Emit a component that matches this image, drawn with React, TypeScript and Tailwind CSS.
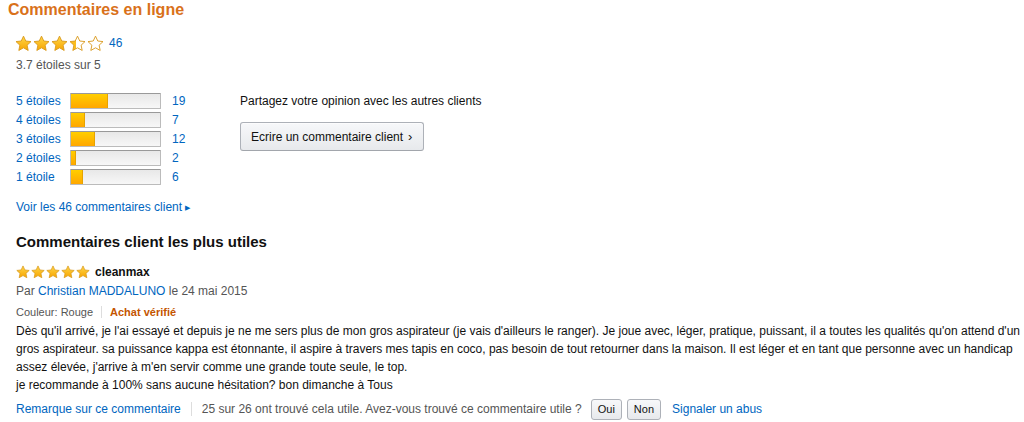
import React from "react";

const histogram = [
  { label: "5 étoiles", count: 19 },
  { label: "4 étoiles", count: 7 },
  { label: "3 étoiles", count: 12 },
  { label: "2 étoiles", count: 2 },
  { label: "1 étoile", count: 6 },
];

function Star({ size, fill }: { size: number; fill: number }) {
  // fill: 0..1 part of the star that is coloured
  const id = `g${Math.round(fill * 100)}`;
  return (
    <svg width={size} height={size} viewBox="0 0 24 24" className="block">
      <defs>
        <linearGradient id={`${id}v`} x1="0" y1="0" x2="0" y2="1">
          <stop offset="0" stopColor="#ffd84a" />
          <stop offset="1" stopColor="#f7a400" />
        </linearGradient>
        <linearGradient id={`${id}h`} x1="0" y1="0" x2="1" y2="0">
          <stop offset={fill} stopColor="#fbbd1b" />
          <stop offset={fill} stopColor="#ffffff" />
        </linearGradient>
      </defs>
      <path
        d="M12 1.6l3.2 6.9 7.4.8-5.5 5.1 1.5 7.4L12 18.1l-6.6 3.7 1.5-7.4-5.5-5.1 7.4-.8z"
        fill={fill >= 1 ? `url(#${id}v)` : `url(#${id}h)`}
        stroke="#d99a1e"
        strokeWidth="1.3"
        strokeLinejoin="round"
      />
    </svg>
  );
}

function Stars({ value, size }: { value: number; size: number }) {
  return (
    <div className="flex items-center gap-[1px]">
      {[0, 1, 2, 3, 4].map((i) => (
        <Star key={i} size={size} fill={Math.max(0, Math.min(1, value - i))} />
      ))}
    </div>
  );
}

export default function App() {
  const total = 46;
  return (
    <div
      className="w-[1024px] h-[422px] bg-white overflow-hidden text-[13px] text-[#111]"
      style={{ fontFamily: '"Liberation Sans", Arial, sans-serif' }}
    >
      <div className="pl-[8px] pt-[1px]">
        <h2 className="text-[16px] font-bold text-[#d9711a] leading-[18px]">
          Commentaires en ligne
        </h2>
      </div>

      <div className="pl-[15px] pr-[8px]">
        {/* Average */}
        <div className="flex items-center gap-[5px] mt-[16px] h-[16px]">
          <Stars value={3.4} size={17} />
          <a className="text-[#0066c0] text-[12px]">46</a>
        </div>
        <div className="text-[12px] text-[#555] mt-[5px] pl-[1px]">3.7 étoiles sur 5</div>

        {/* Histogram + write */}
        <div className="flex mt-[17px]">
          <div className="w-[225px] pl-[1px]">
            {histogram.map((row) => (
              <div key={row.label} className="flex items-center h-[19px]">
                <a className="w-[54px] text-[#0066c0] text-[12px]">{row.label}</a>
                <div className="w-[91px] h-[16px] border border-[#bbb] border-t-[#999] bg-gradient-to-b from-[#e8e8e8] to-[#f7f7f7] rounded-[1px] overflow-hidden">
                  <div
                    className="h-full bg-gradient-to-b from-[#ffce00] to-[#ffa700] border border-[#e6a300] -m-[1px] box-content"
                    style={{ width: `${Math.round((row.count / total) * 88)}px` }}
                  />
                </div>
                <a className="ml-[11px] text-[#0066c0] text-[12px]">{row.count}</a>
              </div>
            ))}
          </div>
          <div className="pt-[1px]">
            <div className="text-[12px] text-[#111]">
              Partagez votre opinion avec les autres clients
            </div>
            <button className="mt-[12px] h-[29px] w-[184px] rounded-[3px] border border-[#adb1b8] border-b-[#a2a6ac] bg-gradient-to-b from-[#f7f8fa] to-[#e7e9ec] text-[12px] text-[#111] flex items-center pl-[10px] shadow-[inset_0_1px_0_rgba(255,255,255,0.6)]">
              Ecrire un commentaire client
              <span className="ml-[5px] text-[13px] leading-none">›</span>
            </button>
          </div>
        </div>

        <a className="block mt-[12px] text-[#0066c0] text-[12px] pl-[1px]">
          Voir les 46 commentaires client <span className="text-[7px] align-middle">▶</span>
        </a>

        {/* Top reviews */}
        <h3 className="mt-[17px] text-[15px] font-bold text-[#111] pl-[1px] leading-[18px]">
          Commentaires client les plus utiles
        </h3>

        <div className="pl-[1px]">
          <div className="flex items-center gap-[5px] mt-[13px] h-[16px]">
            <Stars value={5} size={14} />
            <span className="font-bold text-[12px] text-[#111]">cleanmax</span>
          </div>
          <div className="text-[12px] text-[#555] mt-[2px]">
            Par <a className="text-[#0066c0]">Christian MADDALUNO</a> le 24 mai 2015
          </div>
          <div className="flex items-center text-[11px] mt-[4px]">
            <span className="text-[#555]">Couleur: Rouge</span>
            <span className="mx-[8px] h-[12px] border-l border-[#ddd]" />
            <span className="text-[#c45500] font-bold">Achat vérifié</span>
          </div>
          <p className="text-[12px] leading-[18px] text-[#111] mt-[1px] w-[1008px]">
            Dès qu'il arrivé, je l'ai essayé et depuis je ne me sers plus de mon gros aspirateur (je vais d'ailleurs le ranger). Je joue avec, léger, pratique, puissant, il a toutes les qualités qu'on attend d'un gros aspirateur. sa puissance kappa est étonnante, il aspire à travers mes tapis en coco, pas besoin de tout retourner dans la maison. Il est léger et en tant que personne avec un handicap assez élevée, j'arrive à m'en servir comme une grande toute seule, le top.
            <br />
            je recommande à 100% sans aucune hésitation? bon dimanche à Tous
          </p>
          <div className="flex items-center mt-[5px] text-[12px]">
            <a className="text-[#0066c0]">Remarque sur ce commentaire</a>
            <span className="mx-[10px] h-[14px] border-l border-[#ddd]" />
            <span className="text-[#555]">
              25 sur 26 ont trouvé cela utile. Avez-vous trouvé ce commentaire utile ?
            </span>
            <button className="ml-[9px] h-[21px] px-[6px] rounded-[3px] border border-[#adb1b8] bg-gradient-to-b from-[#f7f8fa] to-[#e7e9ec] text-[11px] text-[#111]">
              Oui
            </button>
            <button className="ml-[5px] h-[21px] px-[6px] rounded-[3px] border border-[#adb1b8] bg-gradient-to-b from-[#f7f8fa] to-[#e7e9ec] text-[11px] text-[#111]">
              Non
            </button>
            <a className="ml-[11px] text-[#0066c0]">Signaler un abus</a>
          </div>
        </div>
      </div>
    </div>
  );
}
